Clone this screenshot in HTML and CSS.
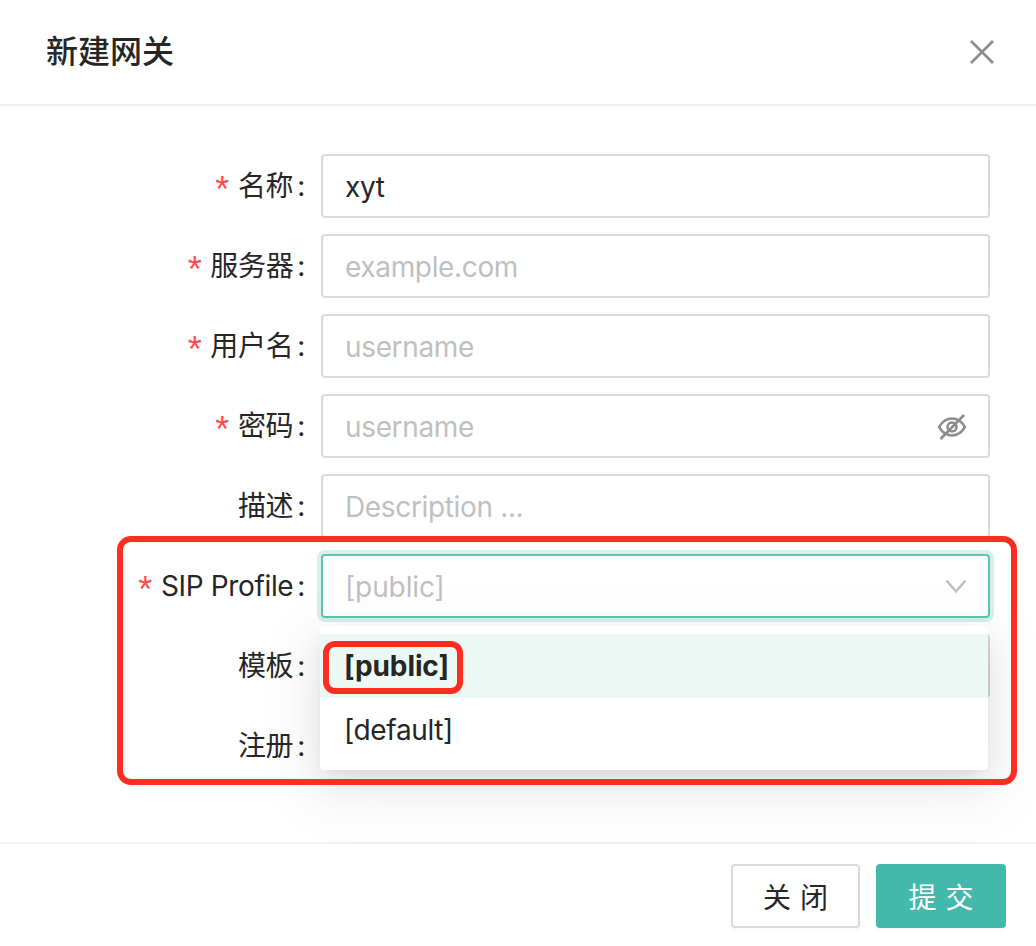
FILE: index.html
```html
<!DOCTYPE html>
<html lang="zh-CN">
<head>
  <meta charset="UTF-8" />
  <title>新建网关</title>
  <link rel="stylesheet" href="styles.css">
</head>
<body>
  <div class="modal">
    <header class="modal-header">
      <h1>新建网关</h1>
      <svg class="close-icon" viewBox="0 0 24 24" width="24" height="24"><path d="M1 1 L23 23 M23 1 L1 23" /></svg>
    </header>

    <form class="modal-body">
      <div class="row">
        <label class="required">名称</label>
        <div class="input"><span class="value">xyt</span></div>
      </div>
      <div class="row">
        <label class="required">服务器</label>
        <div class="input"><span class="placeholder">example.com</span></div>
      </div>
      <div class="row">
        <label class="required">用户名</label>
        <div class="input"><span class="placeholder">username</span></div>
      </div>
      <div class="row">
        <label class="required">密码</label>
        <div class="input">
          <span class="placeholder">username</span>
          <svg class="eye-icon" viewBox="0 0 28 26" width="28" height="26">
            <path d="M1 13 C4.500 7 9 4.500 14 4.500 C19 4.500 23.500 7 27 13 C23.500 19 19 21.500 14 21.500 C9 21.500 4.500 19 1 13 Z" />
            <circle cx="14" cy="13" r="4.500" />
            <path d="M2.500 25 L26 1" />
          </svg>
        </div>
      </div>
      <div class="row">
        <label>描述</label>
        <div class="input"><span class="placeholder">Description ...</span></div>
      </div>
      <div class="row">
        <label class="required">SIP Profile</label>
        <div class="input focused">
          <span class="placeholder">[public]</span>
          <svg class="arrow-icon" viewBox="0 0 20 13" width="20" height="13"><path d="M0.500 0.500 L10 11.500 L19.500 0.500" /></svg>
        </div>
      </div>
      <div class="row">
        <label>模板</label>
        <div class="input"></div>
      </div>
      <div class="row">
        <label>注册</label>
      </div>

      <ul class="dropdown">
        <li class="selected">[public]</li>
        <li>[default]</li>
      </ul>
      <div class="mark mark-group"></div>
      <div class="mark mark-item"></div>
    </form>

    <footer class="modal-footer">
      <button type="button" class="btn">关 闭</button>
      <button type="button" class="btn btn-primary">提 交</button>
    </footer>
  </div>
</body>
</html>
```

FILE: styles.css
```css
* {
  margin: 0;
  padding: 0;
  box-sizing: border-box;
}

body {
  font-family: Inter, "Noto Sans CJK SC", sans-serif;
  background: #fff;
  color: #262626;
  font-size: 28px;
}

.modal {
  width: 1036px;
  height: 946px;
  display: flex;
  flex-direction: column;
}

/* Header */
.modal-header {
  height: 106px;
  padding: 0 42px 0 46px;
  display: flex;
  align-items: center;
  justify-content: space-between;
  border-bottom: 2px solid #f0f0f0;
}

.modal-header h1 {
  font-size: 32px;
  font-weight: 500;
  line-height: 44px;
}

.close-icon path {
  fill: none;
  stroke: #8c8c8c;
  stroke-width: 2.6;
}

/* Form */
.modal-body {
  position: relative;
  height: 736px;
  padding-top: 48px;
  display: flex;
  flex-direction: column;
  gap: 16px;
}

.row {
  display: flex;
  height: 64px;
  padding-right: 46px;
}

.row label {
  width: 321px;
  padding-right: 16px;
  line-height: 64px;
  text-align: right;
  white-space: nowrap;
  letter-spacing: -0.35px;
}

.row label::after {
  content: ":";
  margin-left: 4px;
}

.required::before {
  content: "*";
  color: #ff4d4f;
  margin-right: 9px;
  font-family: "Liberation Sans", sans-serif;
  font-size: 36px;
  line-height: 0;
  vertical-align: -6px;
}

.input {
  flex: 1;
  height: 64px;
  padding: 1px 22px 0;
  display: flex;
  align-items: center;
  justify-content: space-between;
  background: #fff;
  border: 2px solid #d9d9d9;
  border-radius: 4px;
  letter-spacing: -0.35px;
}

.input.focused {
  border-color: #5fc4b3;
  box-shadow: 0 0 0 4px #d8f0ec;
  letter-spacing: -0.1px;
}

.value {
  color: #262626;
}

.placeholder {
  color: #bfbfbf;
}

.eye-icon path,
.eye-icon circle {
  fill: none;
  stroke: #8c8c8c;
  stroke-width: 2.6;
}

.arrow-icon path {
  fill: none;
  stroke: #bfbfbf;
  stroke-width: 2.4;
}

/* Select menu, lies over the last two rows */
.dropdown {
  position: absolute;
  left: 320px;
  top: 520px;
  width: 668px;
  height: 144px;
  padding: 8px 0;
  list-style: none;
  background: #fff;
  border-radius: 4px;
  box-shadow: 0 12px 32px 0 rgba(0, 0, 0, 0.08), 0 6px 12px -8px rgba(0, 0, 0, 0.12), 0 18px 56px 16px rgba(0, 0, 0, 0.05);
}

.dropdown li {
  height: 64px;
  padding: 0 24px;
  line-height: 64px;
  letter-spacing: -0.35px;
}

.dropdown .selected {
  background: #ebf8f4;
  font-weight: 700;
  letter-spacing: -0.1px;
}

/* Red annotation boxes drawn on the screenshot */
.mark {
  position: absolute;
  border: 6px solid #ff2d20;
}

.mark-group {
  left: 117px;
  top: 430px;
  width: 900px;
  height: 249px;
  border-radius: 14px;
}

.mark-item {
  left: 323px;
  top: 535px;
  width: 140px;
  height: 53px;
  border-radius: 12px;
}

/* Footer */
.modal-footer {
  flex: 1;
  padding: 20px 30px 0 0;
  display: flex;
  justify-content: flex-end;
  align-items: flex-start;
  gap: 16px;
  border-top: 2px solid #f0f0f0;
}

.btn {
  width: 129px;
  height: 64px;
  font-family: inherit;
  font-size: 28px;
  word-spacing: 1px;
  color: #262626;
  background: #fff;
  border: 2px solid #d9d9d9;
  border-radius: 4px;
  box-shadow: 0 4px 0 rgba(0, 0, 0, 0.015);
}

.btn-primary {
  width: 130px;
  color: #fff;
  background: #43b9ab;
  border-color: #43b9ab;
}
```
